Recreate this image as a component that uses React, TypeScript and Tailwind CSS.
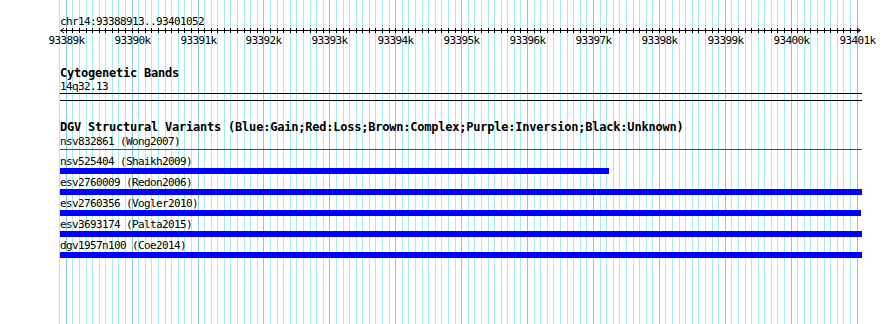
import React from "react";

const START = 93388913;
const END = 93401052;
const TRACK_LEFT = 60;
const TRACK_WIDTH = 800;

const toX = (pos: number) => Math.round(TRACK_LEFT + ((pos - START) * TRACK_WIDTH) / (END - START));

type Variant = {
  name: string;
  study: string;
  end: number; // right edge of the bar in px
};

const variants: Variant[] = [
  { name: "nsv525404", study: "Shaikh2009", end: 609 },
  { name: "esv2760009", study: "Redon2006", end: 862 },
  { name: "esv2760356", study: "Vogler2010", end: 861 },
  { name: "esv3693174", study: "Palta2015", end: 862 },
  { name: "dgv1957n100", study: "Coe2014", end: 862 },
];

const gridPositions: number[] = [];
for (let p = 93388900; p <= 93401000; p += 100) gridPositions.push(p);

const Grid: React.FC = () => (
  <svg className="absolute inset-0" width={890} height={324}>
    {gridPositions.map((p) => {
      const x = toX(p) + 0.5;
      const major = p % 1000 === 0;
      return (
        <line key={p} x1={x} x2={x} y1={0} y2={324} stroke={major ? "#8cc4ea" : "#a8ecf0"} strokeWidth={1} />
      );
    })}
  </svg>
);

const Ruler: React.FC = () => (
  <svg className="block" width={890} height={18}>
    <line x1={60} x2={861} y1={2.5} y2={2.5} stroke="#000" strokeWidth={1} />
    <path d="M64 0 L60.5 2.5 L64 5" fill="none" stroke="#000" strokeWidth={1} />
    <path d="M857 0 L860.5 2.5 L857 5" fill="none" stroke="#000" strokeWidth={1} />
    {gridPositions
      .filter((p) => p > START)
      .map((p) => {
        const x = toX(p) + 0.5;
        return <line key={p} x1={x} x2={x} y1={0} y2={5} stroke="#000" strokeWidth={1} />;
      })}
    {gridPositions
      .filter((p) => p % 1000 === 0)
      .map((p) => (
        <text
          key={p}
          x={toX(p) + 0.5}
          y={16}
          textAnchor="middle"
          fontFamily="'DejaVu Sans Mono', monospace"
          fontSize="11px"
          letterSpacing="-0.62px"
          fill="#000"
        >
          {p / 1000}k
        </text>
      ))}
  </svg>
);

const Label: React.FC<{ children: React.ReactNode; className?: string }> = ({ children, className = "" }) => (
  <div className={`pl-[60px] h-[13px] leading-[13px] text-[11px] tracking-[-0.62px] text-black whitespace-nowrap ${className}`}>
    {children}
  </div>
);

const Title: React.FC<{ children: React.ReactNode; className?: string }> = ({ children, className = "" }) => (
  <div className={`pl-[60px] h-[13px] leading-[13px] text-[12px] font-bold tracking-[-0.22px] text-black whitespace-nowrap ${className}`}>
    {children}
  </div>
);

export default function App() {
  return (
    <div className="relative w-[890px] h-[324px] bg-white overflow-hidden font-['DejaVu_Sans_Mono',monospace]">
      <Grid />
      <div className="relative flex flex-col pt-[15px]">
        <Label>chr14:93388913..93401052</Label>
        <Ruler />

        <Title className="mt-[21px]">Cytogenetic Bands</Title>
        <Label>14q32.13</Label>
        <div className="ml-[60px] w-[802px] h-[8px] border-y border-black" />

        <Title className="mt-[20px]">
          DGV Structural Variants (Blue:Gain;Red:Loss;Brown:Complex;Purple:Inversion;Black:Unknown)
        </Title>
        <Label className="mt-px">nsv832861 (Wong2007)</Label>
        <div className="ml-[60px] w-[802px] h-px mt-px bg-[#ff0000]" />

        <div className="flex flex-col gap-[2px] mt-[5px]">
          {variants.map((v) => (
            <div key={v.name} className="flex flex-col">
              <Label>
                {v.name} ({v.study})
              </Label>
              <div className="ml-[60px] h-[6px] bg-[#0000ff]" style={{ width: v.end - TRACK_LEFT }} />
            </div>
          ))}
        </div>
      </div>
    </div>
  );
}
